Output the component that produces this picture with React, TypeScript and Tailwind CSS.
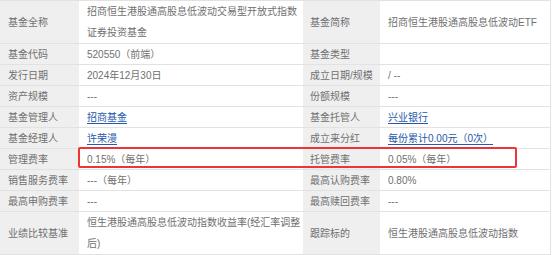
import React from "react";

type Row = {
  l1: string;
  v1: React.ReactNode;
  l2: string;
  v2: React.ReactNode;
  tall?: boolean;
};

const Link = ({ children }: { children: React.ReactNode }) => (
  <span className="text-[#2458a8] underline underline-offset-2">{children}</span>
);

const rows: Row[] = [
  {
    l1: "基金全称",
    v1: (
      <>
        招商恒生港股通高股息低波动交易型开放式指数
        <br />
        证券投资基金
      </>
    ),
    l2: "基金简称",
    v2: "招商恒生港股通高股息低波动ETF",
    tall: true,
  },
  { l1: "基金代码", v1: "520550（前端）", l2: "基金类型", v2: "" },
  { l1: "发行日期", v1: "2024年12月30日", l2: "成立日期/规模", v2: "/ --" },
  { l1: "资产规模", v1: "---", l2: "份额规模", v2: "---" },
  { l1: "基金管理人", v1: <Link>招商基金</Link>, l2: "基金托管人", v2: <Link>兴业银行</Link> },
  { l1: "基金经理人", v1: <Link>许荣漫</Link>, l2: "成立来分红", v2: <Link>每份累计0.00元（0次）</Link> },
  { l1: "管理费率", v1: "0.15%（每年）", l2: "托管费率", v2: "0.05%（每年）" },
  { l1: "销售服务费率", v1: "---（每年）", l2: "最高认购费率", v2: "0.80%" },
  { l1: "最高申购费率", v1: "---", l2: "最高赎回费率", v2: "---" },
  {
    l1: "业绩比较基准",
    v1: (
      <>
        恒生港股通高股息低波动指数收益率(经汇率调整
        <br />
        后)
      </>
    ),
    l2: "跟踪标的",
    v2: "恒生港股通高股息低波动指数",
    tall: true,
  },
];

export default function App() {
  return (
    <div
      className="relative w-[554px] h-[255px] bg-white text-[10px] text-[#707070]"
      style={{ fontFamily: '"Liberation Sans", "Noto Sans CJK SC", sans-serif' }}
    >
      <div className="w-[551px] border-t border-r border-[#e2e2e2]">
        {rows.map((r, i) => (
          <div
            key={i}
            className={`flex border-b border-[#e2e2e2] ${r.tall ? "h-[43px]" : "h-[21px]"} leading-[21px]`}
          >
            <div className="w-[79px] bg-[#efefef] pl-[8px] flex items-center">{r.l1}</div>
            <div className="w-[223px] border-l border-white pl-[7px] flex items-center">
              <div>{r.v1}</div>
            </div>
            <div className="w-[78px] bg-[#efefef] border-l border-white pl-[7px] flex items-center">
              {r.l2}
            </div>
            <div className="flex-1 border-l border-white pl-[7px] flex items-center">
              <div>{r.v2}</div>
            </div>
          </div>
        ))}
      </div>
      <div className="absolute left-[78px] top-[147px] w-[439px] h-[21px] border-2 border-[#ee3434] rounded-[2px]" />
    </div>
  );
}
